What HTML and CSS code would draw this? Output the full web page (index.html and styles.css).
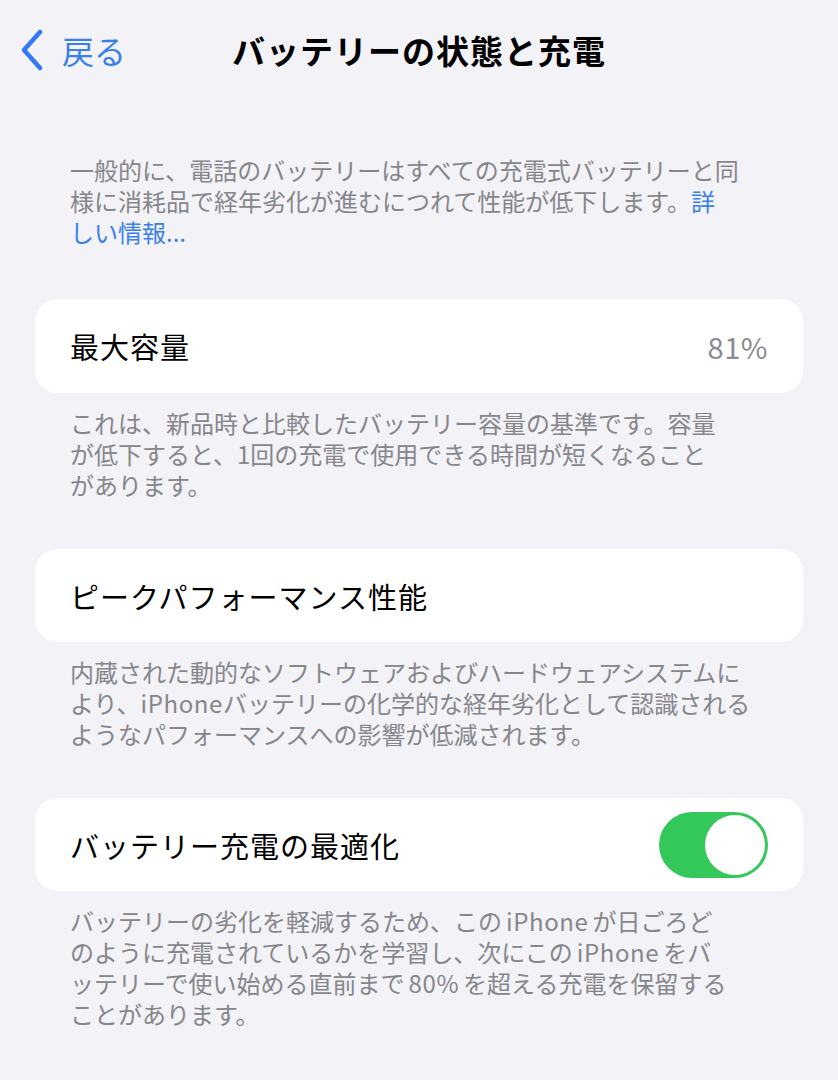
FILE: index.html
```html
<!DOCTYPE html>
<html lang="ja">
<head>
<meta charset="utf-8">
<link rel="stylesheet" href="styles.css">
</head>
<body>
<header class="nav">
  <div class="back">
    <svg class="chev" viewBox="0 0 26 42" width="26" height="42"><path d="M21 3 L5 21 L21 39" fill="none" stroke="#3478f6" stroke-width="4.5" stroke-linecap="round" stroke-linejoin="round"/></svg>
    <span class="back-label">戻る</span>
  </div>
  <h1 class="title">バッテリーの状態と充電</h1>
  <div></div>
</header>

<p class="note intro">一般的に、電話のバッテリーはすべての充電式バッテリーと同<br>様に消耗品で経年劣化が進むにつれて性能が低下します。<span class="link">詳<br>しい情報...</span></p>

<div class="card card-first">
  <span class="label">最大容量</span>
  <span class="value">81%</span>
</div>
<p class="note">これは、新品時と比較したバッテリー容量の基準です。容量<br>が低下すると、1回の充電で使用できる時間が短くなること<br>があります。</p>

<div class="card">
  <span class="label">ピークパフォーマンス性能</span>
</div>
<p class="note">内蔵された動的なソフトウェアおよびハードウェアシステムに<br>より、<span class="latin">iPhone</span>バッテリーの化学的な経年劣化として認識される<br>ようなパフォーマンスへの影響が低減されます。</p>

<div class="card">
  <span class="label">バッテリー充電の最適化</span>
  <span class="toggle"><span class="knob"></span></span>
</div>
<p class="note">バッテリーの劣化を軽減するため、この<span class="latin sp">iPhone</span>が日ごろど<br>のように充電されているかを学習し、次にこの<span class="latin sp">iPhone</span>をバ<br>ッテリーで使い始める直前まで<span class="latin sp">80%</span>を超える充電を保留する<br>ことがあります。</p>
</body>
</html>
```

FILE: styles.css
```css
html, body {
  margin: 0;
  padding: 0;
  background: #f2f2f7;
  font-family: "Noto Sans CJK JP", "Noto Sans", sans-serif;
}
body {
  width: 838px;
  height: 1080px;
  overflow: hidden;
}
.nav {
  height: 100px;
  display: grid;
  grid-template-columns: 1fr auto 1fr;
  align-items: center;
}
.back {
  display: flex;
  align-items: center;
  padding-left: 19px;
  gap: 17px;
}
.chev { display: block; }
.back-label {
  font-size: 32px;
  line-height: 1;
  color: #3a80e8;
}
.title {
  margin: 0;
  font-size: 33px;
  font-weight: 700;
  color: #000;
  letter-spacing: 1px;
}
.note {
  margin: 14px 0 0 0;
  padding: 0 40px 0 70px;
  font-size: 24px;
  line-height: 31px;
  color: #86868b;
  white-space: nowrap;
}
.intro {
  margin-top: 54px;
  margin-bottom: 52px;
}
.link { color: #3a80e8; }
.latin { letter-spacing: 0.6px; }
.latin.sp { margin: 0 4px; }
.card {
  margin: 49px 35px 0;
  height: 93px;
  padding: 0 35px;
  background: #fff;
  border-radius: 22px;
  display: flex;
  align-items: center;
  justify-content: space-between;
  box-sizing: border-box;
}
.card-first {
  margin-top: 0;
  height: 94px;
}
.label {
  font-size: 29px;
  letter-spacing: 1px;
  color: #000;
}
.value {
  font-size: 29px;
  letter-spacing: 0.5px;
  color: #8a8a8e;
}
.toggle {
  width: 109px;
  height: 66px;
  border-radius: 33px;
  background: #34c759;
  display: flex;
  justify-content: flex-end;
  align-items: center;
  padding: 3px;
  box-sizing: border-box;
}
.knob {
  width: 60px;
  height: 60px;
  border-radius: 50%;
  background: #fff;
}
```
